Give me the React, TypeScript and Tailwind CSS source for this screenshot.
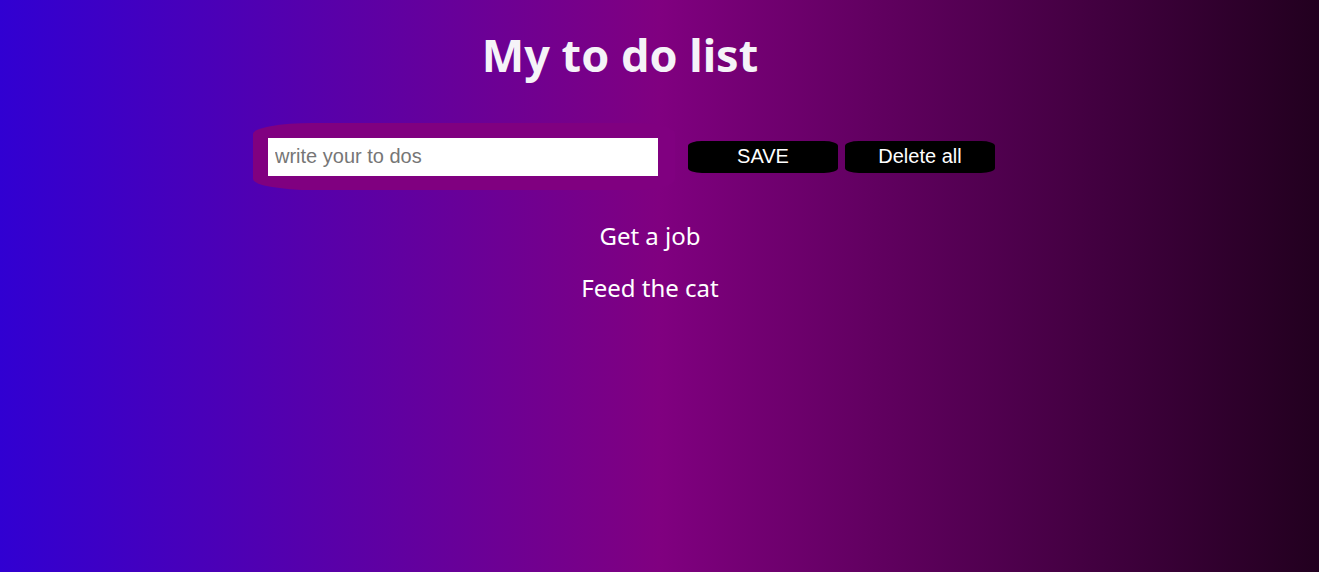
const todos = ["Get a job", "Feed the cat"];

export default function App() {
  return (
    <div
      className="h-[572px] w-full overflow-hidden bg-[linear-gradient(to_right,#3100d2,#800080,#22001f)] text-white"
      style={{ fontFamily: '"Noto Sans", sans-serif' }}
    >
      {/* Title */}
      <h1 className="pt-[26px] pr-[79px] text-center text-[45px] font-bold leading-[58px] text-[#f5f3f8]">
        My to do list
      </h1>

      {/* Input row */}
      <div className="mt-[39px] flex items-center pl-[253px]">
        <div className="flex h-[67px] w-[422px] items-center rounded-[60px_40px_40px_60px/11px_11px_11px_11px] bg-[#800080] pl-[15px]">
          <input
            type="text"
            placeholder="write your to dos"
            className="h-[38px] w-[390px] border-0 bg-white px-[7px] text-[20px] text-black outline-none placeholder:text-[#767676]"
            style={{ fontFamily: '"Liberation Sans", Arial, sans-serif' }}
          />
        </div>
        <div
          className="ml-[13px] flex gap-[7px]"
          style={{ fontFamily: '"Liberation Sans", Arial, sans-serif' }}
        >
          <button className="h-[32px] w-[150px] rounded-[14px/5px] bg-black pb-[1px] text-[20px] leading-[30px] text-white">
            SAVE
          </button>
          <button className="h-[32px] w-[150px] rounded-[14px/5px] bg-black pb-[1px] text-[20px] leading-[30px] text-white">
            Delete all
          </button>
        </div>
      </div>

      {/* List */}
      <ul className="mt-[31px] flex flex-col items-center gap-[23px] pr-[19px] text-[24px] leading-[29px]">
        {todos.map((t) => (
          <li key={t}>{t}</li>
        ))}
      </ul>
    </div>
  );
}
